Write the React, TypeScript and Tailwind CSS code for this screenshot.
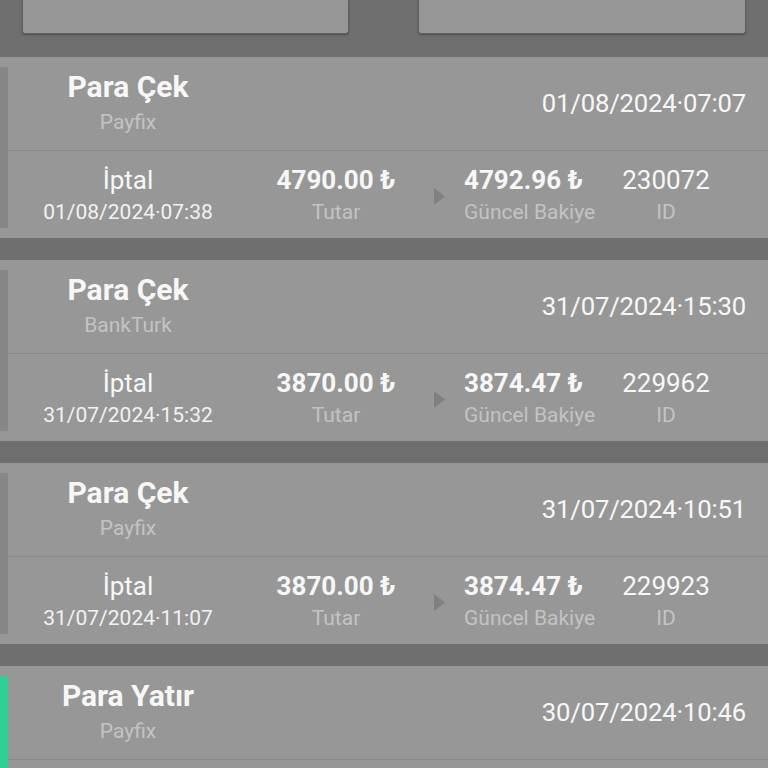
import React from 'react';

type Tx = {
  title: string;
  method: string;
  date: string;
  status?: string;
  statusDate?: string;
  amount?: string;
  balance?: string;
  id?: string;
  deposit?: boolean;
};

const TXS: Tx[] = [
  {
    title: 'Para Çek',
    method: 'Payfix',
    date: '01/08/2024·07:07',
    status: 'İptal',
    statusDate: '01/08/2024·07:38',
    amount: '4790.00 ₺',
    balance: '4792.96 ₺',
    id: '230072'
  },
  {
    title: 'Para Çek',
    method: 'BankTurk',
    date: '31/07/2024·15:30',
    status: 'İptal',
    statusDate: '31/07/2024·15:32',
    amount: '3870.00 ₺',
    balance: '3874.47 ₺',
    id: '229962'
  },
  {
    title: 'Para Çek',
    method: 'Payfix',
    date: '31/07/2024·10:51',
    status: 'İptal',
    statusDate: '31/07/2024·11:07',
    amount: '3870.00 ₺',
    balance: '3874.47 ₺',
    id: '229923'
  },
  {
    title: 'Para Yatır',
    method: 'Payfix',
    date: '30/07/2024·10:46',
    status: 'Onaylandı',
    statusDate: '30/07/2024·10:50',
    amount: '3870.00 ₺',
    balance: '3874.47 ₺',
    id: '229880',
    deposit: true
  }
];

function TxCard({ tx }: { tx: Tx }) {
  return (
    <div className="relative bg-[#979797] h-[181px] shrink-0">
      {/* status strip */}
      <div
        className={`absolute left-0 top-[10px] bottom-[10px] w-[8px] ${
          tx.deposit ? 'bg-[#2fcf96]' : 'bg-[#868686]'
        }`}
      ></div>

      <div className="flex items-center h-[93px] pl-[8px] pr-[22px]">
        <div className="w-[240px] flex flex-col items-center">
          <div className="text-[30px] font-bold text-[#f7f7f7] leading-[36px]">
            {tx.title}
          </div>
          <div className="text-[21px] text-[#c3c3c3] leading-[34px]">
            {tx.method}
          </div>
        </div>
        <div className="ml-auto text-[25.7px] text-[#f7f7f7] tracking-[-0.2px]">
          {tx.date}
        </div>
      </div>

      <div className="h-[1px] ml-[8px] bg-[#878787]"></div>

      <div className="flex items-center h-[87px] pl-[8px] pt-[3px]">
        <div className="w-[240px] flex flex-col items-center">
          <div className="text-[26px] text-[#f7f7f7] leading-[31px]">
            {tx.status}
          </div>
          <div className="text-[21px] text-[#f2f2f2] leading-[32px]">
            {tx.statusDate}
          </div>
        </div>
        <div className="w-[176px] flex flex-col items-center">
          <div className="text-[26px] font-bold text-[#f7f7f7] leading-[31px]">
            {tx.amount}
          </div>
          <div className="text-[21px] text-[#c3c3c3] leading-[32px]">
            Tutar
          </div>
        </div>
        <div className="w-[40px] flex justify-start pl-[9px]">
          <svg width="13" height="19" viewBox="0 0 13 19">
            <path d="M1 1 L12 9.5 L1 18 Z" fill="#808080" />
          </svg>
        </div>
        <div className="w-[140px] flex flex-col items-start">
          <div className="text-[26px] font-bold text-[#f7f7f7] leading-[31px] whitespace-nowrap">
            {tx.balance}
          </div>
          <div className="text-[21px] text-[#c3c3c3] leading-[32px] whitespace-nowrap">
            Güncel Bakiye
          </div>
        </div>
        <div className="w-[124px] flex flex-col items-center">
          <div className="text-[26px] text-[#f7f7f7] leading-[31px]">
            {tx.id}
          </div>
          <div className="text-[21px] text-[#c3c3c3] leading-[32px]">ID</div>
        </div>
      </div>
    </div>
  );
}

export default function App() {
  return (
    <div
      className="w-[768px] h-[768px] overflow-hidden bg-[#6f6f6f]"
      style={{ fontFamily: 'Roboto, "Noto Sans", sans-serif' }}
    >
      {/* filter buttons (cut off at top) */}
      <div className="flex justify-between px-[22px] h-[57px]">
        <div className="w-[327px] h-[34px] bg-[#969696] border-x border-b border-[#5f5f5f] rounded-b-[3px] shadow-[0_1px_2px_rgba(0,0,0,0.3)]"></div>
        <div className="w-[328px] h-[34px] bg-[#969696] border-x border-b border-[#5f5f5f] rounded-b-[3px] shadow-[0_1px_2px_rgba(0,0,0,0.3)]"></div>
      </div>

      <div className="flex flex-col gap-[22px]">
        {TXS.map((tx, i) => (
          <TxCard key={i} tx={tx} />
        ))}
      </div>
    </div>
  );
}
